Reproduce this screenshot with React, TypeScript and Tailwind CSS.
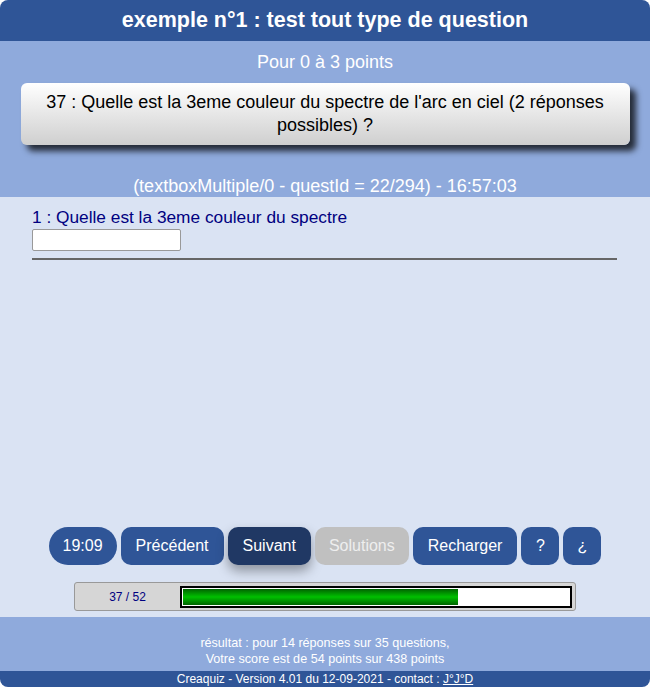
import { useState } from "react";

const buttons = [
  { label: "Précédent", cls: "bg-[#2f5597] text-white px-[15px]" },
  { label: "Suivant", cls: "bg-[#203864] text-white px-[15px] shadow-[0_6px_12px_rgba(0,0,0,0.35)]" },
  { label: "Solutions", cls: "bg-[#c0c0c0] text-[#eeeeee] px-[14px]" },
  { label: "Recharger", cls: "bg-[#2f5597] text-white px-[15px]" },
  { label: "?", cls: "bg-[#2f5597] text-white w-[38px]" },
  { label: "¿", cls: "bg-[#2f5597] text-white w-[38px]" },
];

export default function App() {
  const [answer, setAnswer] = useState("");
  const done = 37;
  const total = 52;

  return (
    <div className="w-[650px] h-[687px] flex flex-col bg-white font-['Liberation_Sans',Arial,sans-serif]">
      <div className="flex flex-col flex-1 rounded-[8px] overflow-hidden">
        {/* Header */}
        <div className="h-[41px] shrink-0 bg-[#2f5597] flex items-center justify-center text-white text-[21.5px] font-bold">
          exemple n°1 : test tout type de question
        </div>

        {/* Question block */}
        <div className="h-[156px] shrink-0 bg-[#8faadc] flex flex-col items-center pt-[11px]">
          <div className="text-white text-[18px] leading-[21px]">Pour 0 à 3 points</div>
          <div className="mt-[10px] w-[609px] h-[62px] rounded-[6px] bg-gradient-to-b from-white to-[#cfcfcf] shadow-[6px_6px_6px_rgba(0,0,0,0.75)] flex items-center justify-center px-[18px] text-center text-[18px] leading-[23px] text-black">
            37 : Quelle est la 3eme couleur du spectre de l'arc en ciel (2 réponses possibles) ?
          </div>
          <div className="mt-[31px] text-white text-[18px] leading-[21px]">
            (textboxMultiple/0 - questId = 22/294) - 16:57:03
          </div>
        </div>

        {/* Body */}
        <div className="flex-1 bg-[#dae3f3] flex flex-col px-[32px] pt-[10px]">
          <div className="text-[#000080] text-[17.3px] leading-[20px]">1 : Quelle est la 3eme couleur du spectre</div>
          <input
            value={answer}
            onChange={(e) => setAnswer(e.target.value)}
            className="mt-[2px] w-[149px] h-[22px] bg-white border border-[#999] rounded-[2px] px-1 text-[14px] outline-none"
          />
          <div className="mt-[7px] w-[585px] h-[2px] bg-[#666]" />

          <div className="flex-1" />

          {/* Buttons */}
          <div className="flex justify-center gap-[4px] -mx-[32px]">
            <div className="h-[38px] px-[14px] rounded-full bg-[#2f5597] text-white text-[16px] flex items-center">19:09</div>
            {buttons.map((b) => (
              <button
                key={b.label}
                className={`h-[38px] rounded-[10px] text-[16px] flex items-center justify-center ${b.cls}`}
              >
                {b.label}
              </button>
            ))}
          </div>

          {/* Progress */}
          <div className="mt-[17px] mb-[6px] ml-[42px] w-[502px] h-[29px] bg-[#d6d6d6] border border-[#999] rounded-[3px] flex items-center pr-[3px]">
            <div className="w-[105px] text-center text-[12px] text-[#000080]">
              {done} / {total}
            </div>
            <div className="flex-1 h-[22px] border-2 border-black bg-white p-[1px]">
              <div
                className="h-full bg-[linear-gradient(to_bottom,#006400,#00c000_50%,#006400)]"
                style={{ width: `${(done / total) * 100}%` }}
              />
            </div>
          </div>
        </div>

        {/* Footer result */}
        <div className="h-[54px] shrink-0 bg-[#8faadc] flex flex-col items-center justify-end pb-[4px] text-white text-[12.6px] leading-[16px]">
          <div>résultat : pour 14 réponses sur 35 questions,</div>
          <div>Votre score est de 54 points sur 438 points</div>
        </div>

        {/* Bottom bar */}
        <div className="h-[16px] shrink-0 bg-[#2f5597] flex items-center justify-center text-white text-[12px] leading-[16px]">
          Creaquiz - Version 4.01 du 12-09-2021 - contact :&nbsp;<span className="underline">J°J°D</span>
        </div>
      </div>
    </div>
  );
}
